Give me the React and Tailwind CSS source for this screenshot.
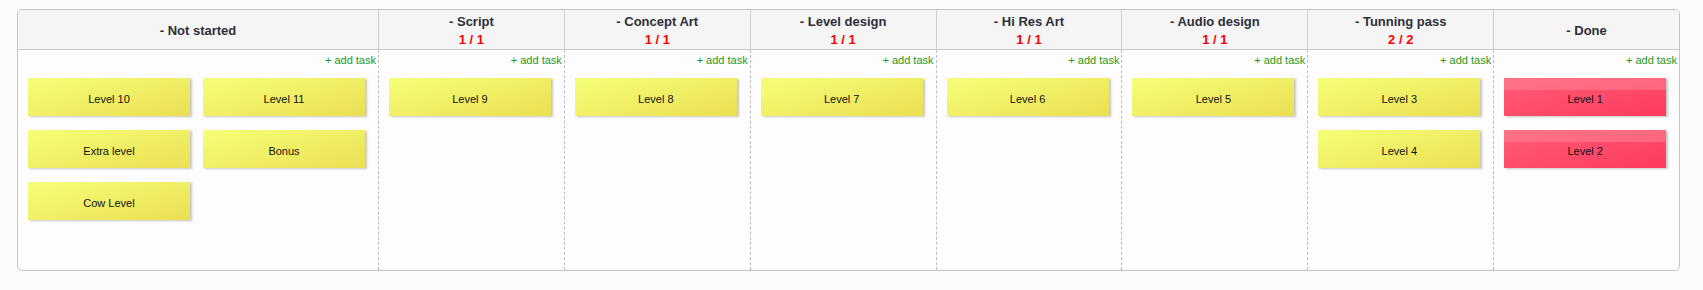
import React from "react";

const columns = [
  { title: "- Not started", count: null, tasks: ["Level 10", "Level 11", "Extra level", "Bonus", "Cow Level"] },
  { title: "- Script", count: "1 / 1", tasks: ["Level 9"] },
  { title: "- Concept Art", count: "1 / 1", tasks: ["Level 8"] },
  { title: "- Level design", count: "1 / 1", tasks: ["Level 7"] },
  { title: "- Hi Res Art", count: "1 / 1", tasks: ["Level 6"] },
  { title: "- Audio design", count: "1 / 1", tasks: ["Level 5"] },
  { title: "- Tunning pass", count: "2 / 2", tasks: ["Level 3", "Level 4"] },
  { title: "- Done", count: null, tasks: ["Level 1", "Level 2"], done: true },
];

function Card({ label, done }) {
  return (
    <div
      className={
        "w-[162px] h-[38px] pt-[5px] flex items-center justify-center text-[11px] text-[#111] shadow-[2px_1px_2px_rgba(0,0,0,0.22)] " +
        (done
          ? "bg-[linear-gradient(to_bottom,rgba(255,140,155,0.45)_0,rgba(255,140,155,0.45)_12px,transparent_12px),linear-gradient(165deg,#ff5d78,#ff3a5e)]"
          : "bg-[linear-gradient(165deg,#f5ff78,#ebdf52)]")
      }
    >
      {label}
    </div>
  );
}

export default function App() {
  return (
    <div className="min-h-[290px] bg-[#fcfcfc] pt-[9px] pl-[17px] font-['Liberation_Sans',Arial,sans-serif]">
      <div className="w-[1663px] h-[262px] border border-[#c4c4c4] rounded-[5px] bg-[#fdfdfd] overflow-hidden grid grid-cols-[360px_repeat(7,1fr)] grid-rows-[40px_1fr]">
        {columns.map((c, i) => (
          <div
            key={"h" + i}
            className={
              "bg-[#f5f5f5] border-b border-[#c8c8c8] pt-[3px] flex flex-col items-center justify-center leading-[18px] text-[13px] font-bold " +
              (i > 0 ? "border-l border-l-[#cfcfcf]" : "")
            }
          >
            <div className="text-[#2e2e3a]">{c.title}</div>
            {c.count && <div className="text-[#ff0000]">{c.count}</div>}
          </div>
        ))}
        {columns.map((c, i) => (
          <div
            key={"b" + i}
            className={"flex flex-col " + (i > 0 ? "border-l border-dashed border-l-[#bdbdbd]" : "")}
          >
            <div className="text-right pr-[2px] pt-[4px] text-[11px] leading-[13px] text-[#1c9a1c]">+ add task</div>
            <div className="flex flex-wrap gap-x-[13px] gap-y-[14px] pl-[10px] pt-[11px]">
              {c.tasks.map((t) => (
                <Card key={t} label={t} done={c.done} />
              ))}
            </div>
          </div>
        ))}
      </div>
    </div>
  );
}
